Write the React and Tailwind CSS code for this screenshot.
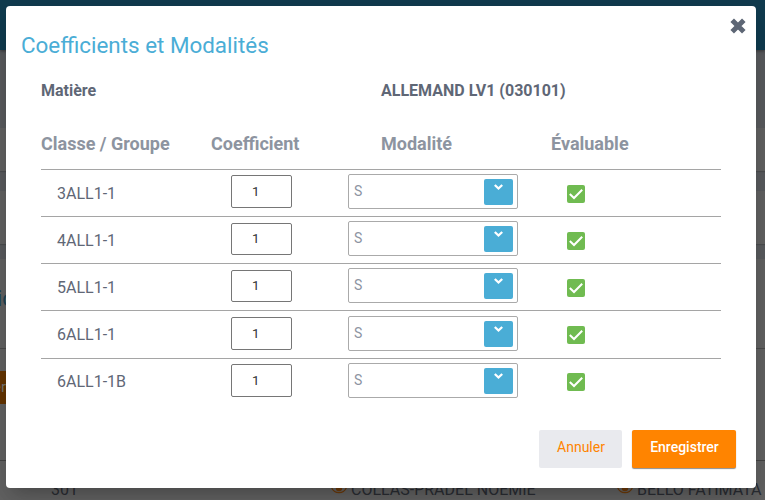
import React from "react";

const rows = [
  { name: "3ALL1-1", h: "h-[47px]", label: "pt-[14px]", field: "pt-1", input: "mt-px h-[33px] leading-[31px]", check: "mt-[15px]" },
  { name: "4ALL1-1", h: "h-[47px]", label: "pt-[14px]", field: "pt-1", input: "mt-[2px] h-[32px] leading-[29px]", check: "mt-[15px]" },
  { name: "5ALL1-1", h: "h-[47px]", label: "pt-[14px]", field: "pt-1", input: "mt-[2px] h-[32px] leading-[29px]", check: "mt-[15px]" },
  { name: "6ALL1-1", h: "h-[48px]", label: "pt-[14px]", field: "pt-[5px]", input: "mt-px h-[33px] leading-[31px]", check: "mt-[15px]" },
  { name: "6ALL1-1B", h: "h-[47px]", label: "pt-[13px]", field: "pt-1", input: "mt-px h-[33px] leading-[31px]", check: "mt-[14px]" },
];

function Eye() {
  return (
    <svg width="16" height="12" viewBox="0 0 16 12" fill="none">
      <path d="M.8 6C3.5 1.8 12.5 1.8 15.2 6C12.5 12.2 3.5 12.2.8 6Z" stroke="#6e3a08" strokeWidth="1.2" />
      <circle cx="8" cy="6" r="3.2" fill="#6e3a08" />
      <circle cx="7.2" cy="5" r="1" fill="#8a7460" />
    </svg>
  );
}

function Backdrop() {
  return (
    <div className="flex h-[500px] w-[765px] flex-col bg-[#5a5c5f]">
      <div className="h-[50px] shrink-0 bg-[#103c50] shadow-[0_1px_3px_rgba(0,0,0,0.4)]" />
      <div className="mt-[78px] h-[43px] shrink-0 bg-[#636363] shadow-[0_1px_1px_rgba(0,0,0,0.15)]" />
      <div className="mt-5 h-[53px] shrink-0 bg-[#636363] shadow-[0_1px_1px_rgba(0,0,0,0.15)]" />
      <div className="mt-[15px] flex h-[241px] shrink-0 flex-col bg-[#636363]">
        <div className="h-[90px] border-b border-[#4c4c4c] pt-[27px] text-[22px] leading-[26px] text-[#1e4556]">
          <span className="-ml-[3px]">ic</span>
        </div>
        <div className="mt-[22px] flex h-[33px] w-20 items-center bg-[#663500] text-[15px] text-[#777]">
          <span className="-ml-[7px]">er</span>
        </div>
        <div className="h-[57px] border-b border-[#444]" />
        <div className="flex h-[38px] pt-[19px] text-base leading-[19px] text-[#2a2d33]">
          <span className="ml-[51px] w-[280px]">301</span>
          <span className="mt-[2px] w-[20px]"><Eye /></span>
          <span className="w-[266px]">COLLAS-PRADEL NOEMIE</span>
          <span className="mt-[2px] w-[20px]"><Eye /></span>
          <span className="whitespace-nowrap">BELLO FATIMATA</span>
        </div>
      </div>
    </div>
  );
}

function Row({ name, h, label, field, input, check }) {
  return (
    <div className={"flex items-start border-t border-[#a5a5a5] " + h}>
      <div className={"w-[190px] pl-4 text-base leading-[19px] text-[#5f6776] " + label}>{name}</div>
      <div className={"flex items-start " + field}>
        <div className={"w-[61px] rounded-[2px] border border-[#767676] pl-5 text-[13.33px] text-[#333] " + input}>
          1
        </div>
        <div className="ml-14 flex h-[35px] w-[170px] justify-between rounded-[2px] border border-[#aaa] pl-[5px] pr-1 pt-1">
          <span className="text-[14px] leading-[24px] text-[#8d94a2]">S</span>
          <div className="flex h-[26px] w-[29px] justify-center rounded-[2px] bg-[#4aadd6] pt-[5px]">
            <svg width="9" height="7" viewBox="0 0 9 7" fill="none">
              <path d="M.8 1L4.5 4.5L8.2 1" stroke="white" strokeWidth="2.3" />
            </svg>
          </div>
        </div>
      </div>
      <div className={"ml-[49px] flex size-[18px] items-center justify-center rounded-[2px] bg-[#70bb51] " + check}>
        <svg width="18" height="18" viewBox="0 0 18 18" fill="none">
          <path d="M2.8 9L7 13L15.2 4.7" stroke="white" strokeWidth="2" />
        </svg>
      </div>
    </div>
  );
}

export default function App() {
  return (
    <div className="relative h-[500px] w-[765px] overflow-hidden font-[Roboto,'Liberation_Sans',sans-serif]">
      <Backdrop />
      <div className="absolute left-[6px] top-[6px] flex h-[482px] w-[750px] flex-col rounded bg-white shadow-[0_11px_15px_-7px_rgba(0,0,0,0.2),0_9px_46px_8px_rgba(0,0,0,0.12)]">
        <div className="flex h-[67px] shrink-0 justify-between pl-[15px] pr-[10px]">
          <h1 className="pt-[26px] text-[22.4px] leading-[26px] text-[#4aadd6]">Coefficients et Modalités</h1>
          <svg className="mt-3" width="16" height="16" viewBox="0 0 16 16" fill="none">
            <path d="M2.2 2.2L13.8 13.8M13.8 2.2L2.2 13.8" stroke="#5d6675" strokeWidth="5" />
          </svg>
        </div>
        <div className="flex h-[55px] shrink-0 pl-[35px] pt-[7px] text-base font-bold leading-[22px] text-[#5f6776]">
          <div className="w-[340px]">Matière</div>
          <div>ALLEMAND LV1 (030101)</div>
        </div>
        <div className="flex h-[41px] shrink-0 pl-[35px] text-lg font-bold leading-[32px] text-[#8d94a0]">
          <div className="w-[170px]">Classe / Groupe</div>
          <div className="w-[170px]">Coefficient</div>
          <div className="w-[170px]">Modalité</div>
          <div>Évaluable</div>
        </div>
        <div className="mx-[35px] flex flex-col">
          {rows.map((r) => (
            <Row key={r.name} {...r} />
          ))}
        </div>
        <div className="mt-[25px] flex justify-end gap-[10px] pr-5 text-[14px] leading-[34px]">
          <button className="h-[38px] w-[83px] rounded-[2px] bg-[#e9eaee] pb-1 pl-px text-[#ff8400]">Annuler</button>
          <button className="h-[38px] w-[104px] rounded-[2px] bg-[#ff8400] pb-1 pl-px font-medium text-white shadow-[0_1px_1px_rgba(0,0,0,0.45)]">
            Enregistrer
          </button>
        </div>
      </div>
    </div>
  );
}
